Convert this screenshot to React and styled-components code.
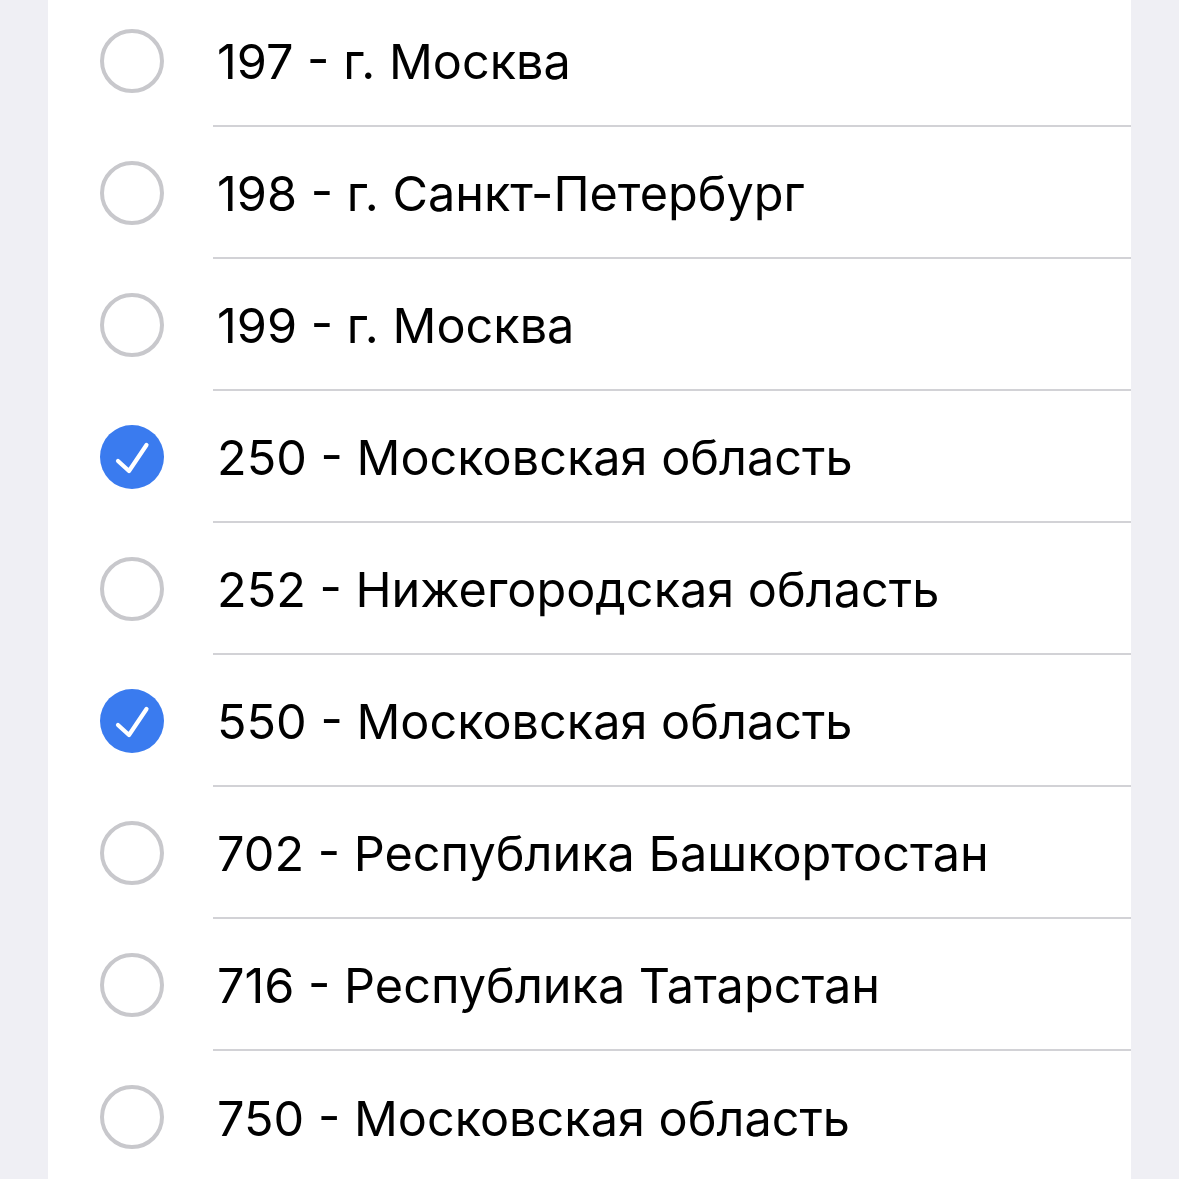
import React from "react";
import styled, { createGlobalStyle } from "styled-components";

const Global = createGlobalStyle`
  html, body { margin: 0; padding: 0; background: #efeff4; }
  body { font-family: Inter, "Noto Sans", "Liberation Sans", sans-serif; overflow: hidden; }
`;

const Page = styled.div`
  height: 1179px;
  overflow: hidden;
  padding: 0 48px;
  background: #efeff4;
`;

const Card = styled.div`
  background: #ffffff;
  height: 100%;
  overflow: hidden;
`;

const List = styled.ul`
  list-style: none;
  margin: -5px 0 0 0;
  padding: 0;
`;

const Row = styled.li`
  display: flex;
  align-items: center;
  height: 132px;
  padding-left: 52px;
`;

const Radio = styled.span`
  flex: none;
  box-sizing: border-box;
  width: 64px;
  height: 64px;
  border-radius: 50%;
  display: flex;
  align-items: center;
  justify-content: center;
  border: ${(p) => (p.$checked ? "none" : "4px solid #c8c8cc")};
  background: ${(p) => (p.$checked ? "#3a7bef" : "transparent")};
  margin-top: 0px;
`;

const Body = styled.div`
  flex: 1;
  align-self: stretch;
  margin-left: 49px;
  display: flex;
  align-items: center;
  border-bottom: ${(p) => (p.$last ? "none" : "2px solid #d2d2d6")};
  box-sizing: border-box;
  padding-left: 4px;
`;

const Label = styled.span`
  font-size: 48.6px;
  color: #000;
  margin-top: 2px;
`;

const items = [
  ["197 - г. Москва", false],
  ["198 - г. Санкт-Петербург", false],
  ["199 - г. Москва", false],
  ["250 - Московская область", true],
  ["252 - Нижегородская область", false],
  ["550 - Московская область", true],
  ["702 - Республика Башкортостан", false],
  ["716 - Республика Татарстан", false],
  ["750 - Московская область", false],
];

const Check = () => (
  <svg width="64" height="64" viewBox="0 0 64 64">
    <path
      d="M18 36 L29 46 L46.5 20"
      fill="none"
      stroke="#fff"
      strokeWidth="4.2"
      strokeLinecap="round"
      strokeLinejoin="round"
    />
  </svg>
);

export default function App() {
  return (
    <>
      <Global />
      <Page>
        <Card>
          <List>
            {items.map(([t, c], i) => (
              <Row key={t + i}>
                <Radio $checked={c}>{c && <Check />}</Radio>
                <Body $last={i === items.length - 1}>
                  <Label>{t}</Label>
                </Body>
              </Row>
            ))}
          </List>
        </Card>
      </Page>
    </>
  );
}
